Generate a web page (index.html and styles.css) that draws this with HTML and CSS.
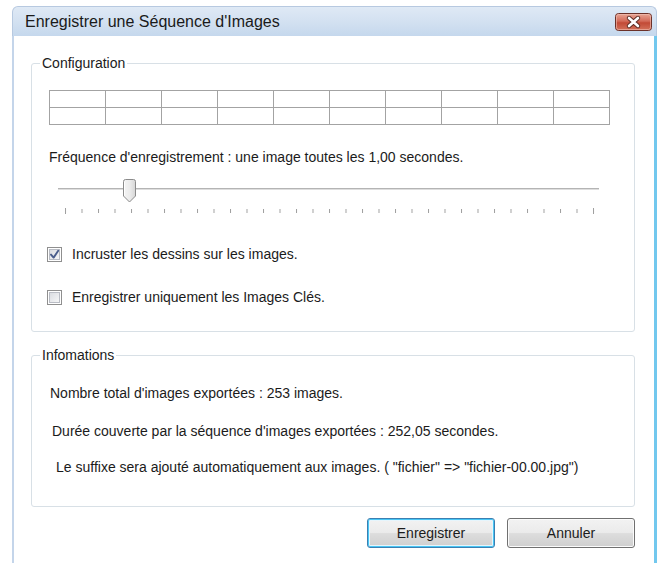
FILE: index.html
```
<!DOCTYPE html>
<html lang="fr">
<head>
<meta charset="utf-8">
<title>Enregistrer une Séquence d'Images</title>
<link rel="stylesheet" href="styles.css">
</head>
<body>
<div class="window">
  <div class="titlebar">
    <span class="title">Enregistrer une Séquence d'Images</span>
    <button class="close" aria-label="Fermer">
      <svg width="37" height="18" viewBox="0 0 37 18">
        <defs>
          <linearGradient id="closeBg" x1="0" y1="0" x2="0" y2="1">
            <stop offset="0" stop-color="#e9a898"/>
            <stop offset="0.45" stop-color="#d36a58"/>
            <stop offset="0.55" stop-color="#c24a36"/>
            <stop offset="1" stop-color="#d4735c"/>
          </linearGradient>
        </defs>
        <rect x="0.5" y="0.5" width="36" height="17" rx="3" fill="url(#closeBg)" stroke="#6b3129"/>
        <rect x="1.5" y="1.5" width="34" height="15" rx="2" fill="none" stroke="#f2c2b6" stroke-opacity="0.6"/>
        <path d="M14 5 L23 13 M23 5 L14 13" stroke="#5a2a22" stroke-width="4.4" stroke-linecap="round"/>
        <path d="M14 5 L23 13 M23 5 L14 13" stroke="#ffffff" stroke-width="2.6" stroke-linecap="round"/>
      </svg>
    </button>
  </div>
  <div class="client">
    <fieldset class="group group-config">
      <legend>Configuration</legend>
      <div class="group-body config-body">
        <div class="frame-grid">
          <span></span><span></span><span></span><span></span><span></span><span></span><span></span><span></span><span></span><span></span>
          <span></span><span></span><span></span><span></span><span></span><span></span><span></span><span></span><span></span><span></span>
        </div>
        <p class="freq">Fréquence d'enregistrement : une image toutes les 1,00 secondes.</p>
        <svg class="slider" width="560" height="42" viewBox="0 0 560 42">
          <defs>
            <linearGradient id="thumbBg" x1="0" y1="0" x2="1" y2="0">
              <stop offset="0" stop-color="#f4f4f4"/>
              <stop offset="0.5" stop-color="#ececec"/>
              <stop offset="1" stop-color="#d6d6d6"/>
            </linearGradient>
            <pattern id="ticks" x="16" y="0" width="16.5" height="42" patternUnits="userSpaceOnUse">
              <rect x="0" y="34" width="1" height="4" fill="#a0a0a0"/>
            </pattern>
          </defs>
          <!-- track -->
          <rect x="9" y="13" width="541" height="1" fill="#b4b4b4"/>
          <rect x="9" y="14" width="541" height="1" fill="#dedede"/>
          <!-- ticks -->
          <rect x="16" y="30" width="530" height="10" fill="url(#ticks)"/>
          <rect x="16" y="33" width="1" height="6" fill="#a0a0a0"/>
          <rect x="544" y="33" width="1" height="6" fill="#a0a0a0"/>
          <!-- thumb -->
          <path d="M74.5 6.5 Q74.5 4.5 76.5 4.5 H84.5 Q86.5 4.5 86.5 6.5 V21 L80.5 27 L74.5 21 Z" fill="url(#thumbBg)" stroke="#8b8b8b"/>
          <path d="M75.5 7 V20.5" stroke="#ffffff"/>
        </svg>
        <label class="check">
          <svg class="box" width="15" height="15" viewBox="0 0 15 15">
            <defs>
              <linearGradient id="boxIn" x1="0" y1="0" x2="1" y2="1">
                <stop offset="0" stop-color="#d9dbe0"/>
                <stop offset="1" stop-color="#f7f7f8"/>
              </linearGradient>
            </defs>
            <rect x="0.5" y="0.5" width="14" height="14" fill="#ffffff" stroke="#8f8f8f"/>
            <rect x="2.5" y="2.5" width="10" height="10" fill="url(#boxIn)" stroke="#b9bcc4"/>
            <path d="M4 7.6 L6.6 10.6 L11.2 3.8" fill="none" stroke="#4a5d8c" stroke-width="1.9" stroke-linecap="round" stroke-linejoin="round"/>
          </svg>
          <span>Incruster les dessins sur les images.</span>
        </label>
        <label class="check check-second">
          <svg class="box" width="15" height="15" viewBox="0 0 15 15">
            <rect x="0.5" y="0.5" width="14" height="14" fill="#ffffff" stroke="#8f8f8f"/>
            <rect x="2.5" y="2.5" width="10" height="10" fill="url(#boxIn)" stroke="#b9bcc4"/>
          </svg>
          <span>Enregistrer uniquement les Images Clés.</span>
        </label>
      </div>
    </fieldset>

    <fieldset class="group group-info">
      <legend>Infomations</legend>
      <div class="group-body info-body">
        <p class="info-line line-1">Nombre total d'images exportées : 253 images.</p>
        <p class="info-line line-2">Durée couverte par la séquence d'images exportées : 252,05 secondes.</p>
        <p class="info-line line-3">Le suffixe sera ajouté automatiquement aux images. ( "fichier" =&gt; "fichier-00.00.jpg")</p>
      </div>
    </fieldset>

    <div class="actions">
      <button class="btn btn-default">Enregistrer</button>
      <button class="btn">Annuler</button>
    </div>
  </div>
</div>
</body>
</html>
```

FILE: styles.css
```
* {
  box-sizing: border-box;
}

html, body {
  margin: 0;
  padding: 0;
  background: #ffffff;
}

body {
  font-family: "Liberation Sans", Arial, sans-serif;
  font-size: 14px;
  color: #1b1b1b;
  overflow: hidden;
}

p {
  margin: 0;
}

/* window frame */
.window {
  margin: 6px 0 0 12px;
  width: 645px;
  height: 557px;
  display: flex;
  flex-direction: column;
}

.titlebar {
  height: 30px;
  flex: none;
  display: flex;
  align-items: flex-start;
  background: linear-gradient(#dfe9f5 0%, #d3e1f1 50%, #c5d8ed 100%);
  border: 1px solid #b7c9e0;
  border-bottom: none;
  border-radius: 6px 6px 0 0;
  padding-left: 12px;
}

.title {
  font-size: 16px;
  line-height: 18px;
  margin-top: 6px;
  color: #1a1a1a;
}

.close {
  margin: 6px 4px 0 auto;
  padding: 0;
  border: none;
  background: none;
  width: 37px;
  height: 18px;
  display: block;
}

.close svg {
  display: block;
}

.client {
  flex: 1;
  background: #ffffff;
  border-left: 2px solid #c4d5ea;
  border-right: 3px solid #72c8ee;
  padding: 19px 19px 0 17px;
  display: flex;
  flex-direction: column;
}

/* group boxes */
.group {
  margin: 0;
  padding: 0;
  min-width: 0;
  border: 1px solid #d8e0e6;
  border-radius: 3px;
}

.group legend {
  margin-left: 8px;
  padding: 0 2px;
  line-height: 16px;
  color: #1b1b1b;
}

.group-body {
  padding-left: 17px;
}

.group-config {
  height: 277px;
}

.config-body {
  padding-top: 19px;
}

.frame-grid {
  display: grid;
  grid-template-columns: repeat(10, 55px);
  grid-auto-rows: 16px;
  gap: 1px;
  padding: 1px;
  width: 561px;
  background: #a3a3a3;
}

.frame-grid span {
  background: #ffffff;
}

.freq {
  margin-top: 24px;
  line-height: 16px;
}

.slider {
  display: block;
  margin-top: 10px;
}

.check {
  display: flex;
  align-items: center;
  height: 16px;
  margin-top: 29px;
  margin-left: -2px;
  line-height: 16px;
}

.check .box {
  flex: none;
  margin-right: 10px;
}

.check-second {
  margin-top: 27px;
}

.group-info {
  margin-top: 15px;
  height: 160px;
}

.info-body {
  padding-top: 22px;
}

.info-line {
  line-height: 16px;
}

.line-1 {
  padding-left: 1px;
}

.line-2 {
  margin-top: 22px;
  padding-left: 3px;
}

.line-3 {
  margin-top: 20px;
  padding-left: 7px;
}

/* dialog buttons */
.actions {
  display: flex;
  justify-content: flex-end;
  gap: 12px;
  margin-top: 11px;
}

.btn {
  width: 128px;
  height: 30px;
  padding: 0;
  font: inherit;
  color: #1b1b1b;
  border: 1px solid #707070;
  border-radius: 3px;
  background: linear-gradient(#f2f2f2 0%, #ebebeb 48%, #dddddd 52%, #cfcfcf 100%);
  box-shadow: inset 0 0 0 1px #fbfbfb;
}

.btn-default {
  border-color: #3c7fb1;
  box-shadow: inset 0 0 0 1px #48c6f5, inset 0 0 0 2px #e6f5fc;
}
```
